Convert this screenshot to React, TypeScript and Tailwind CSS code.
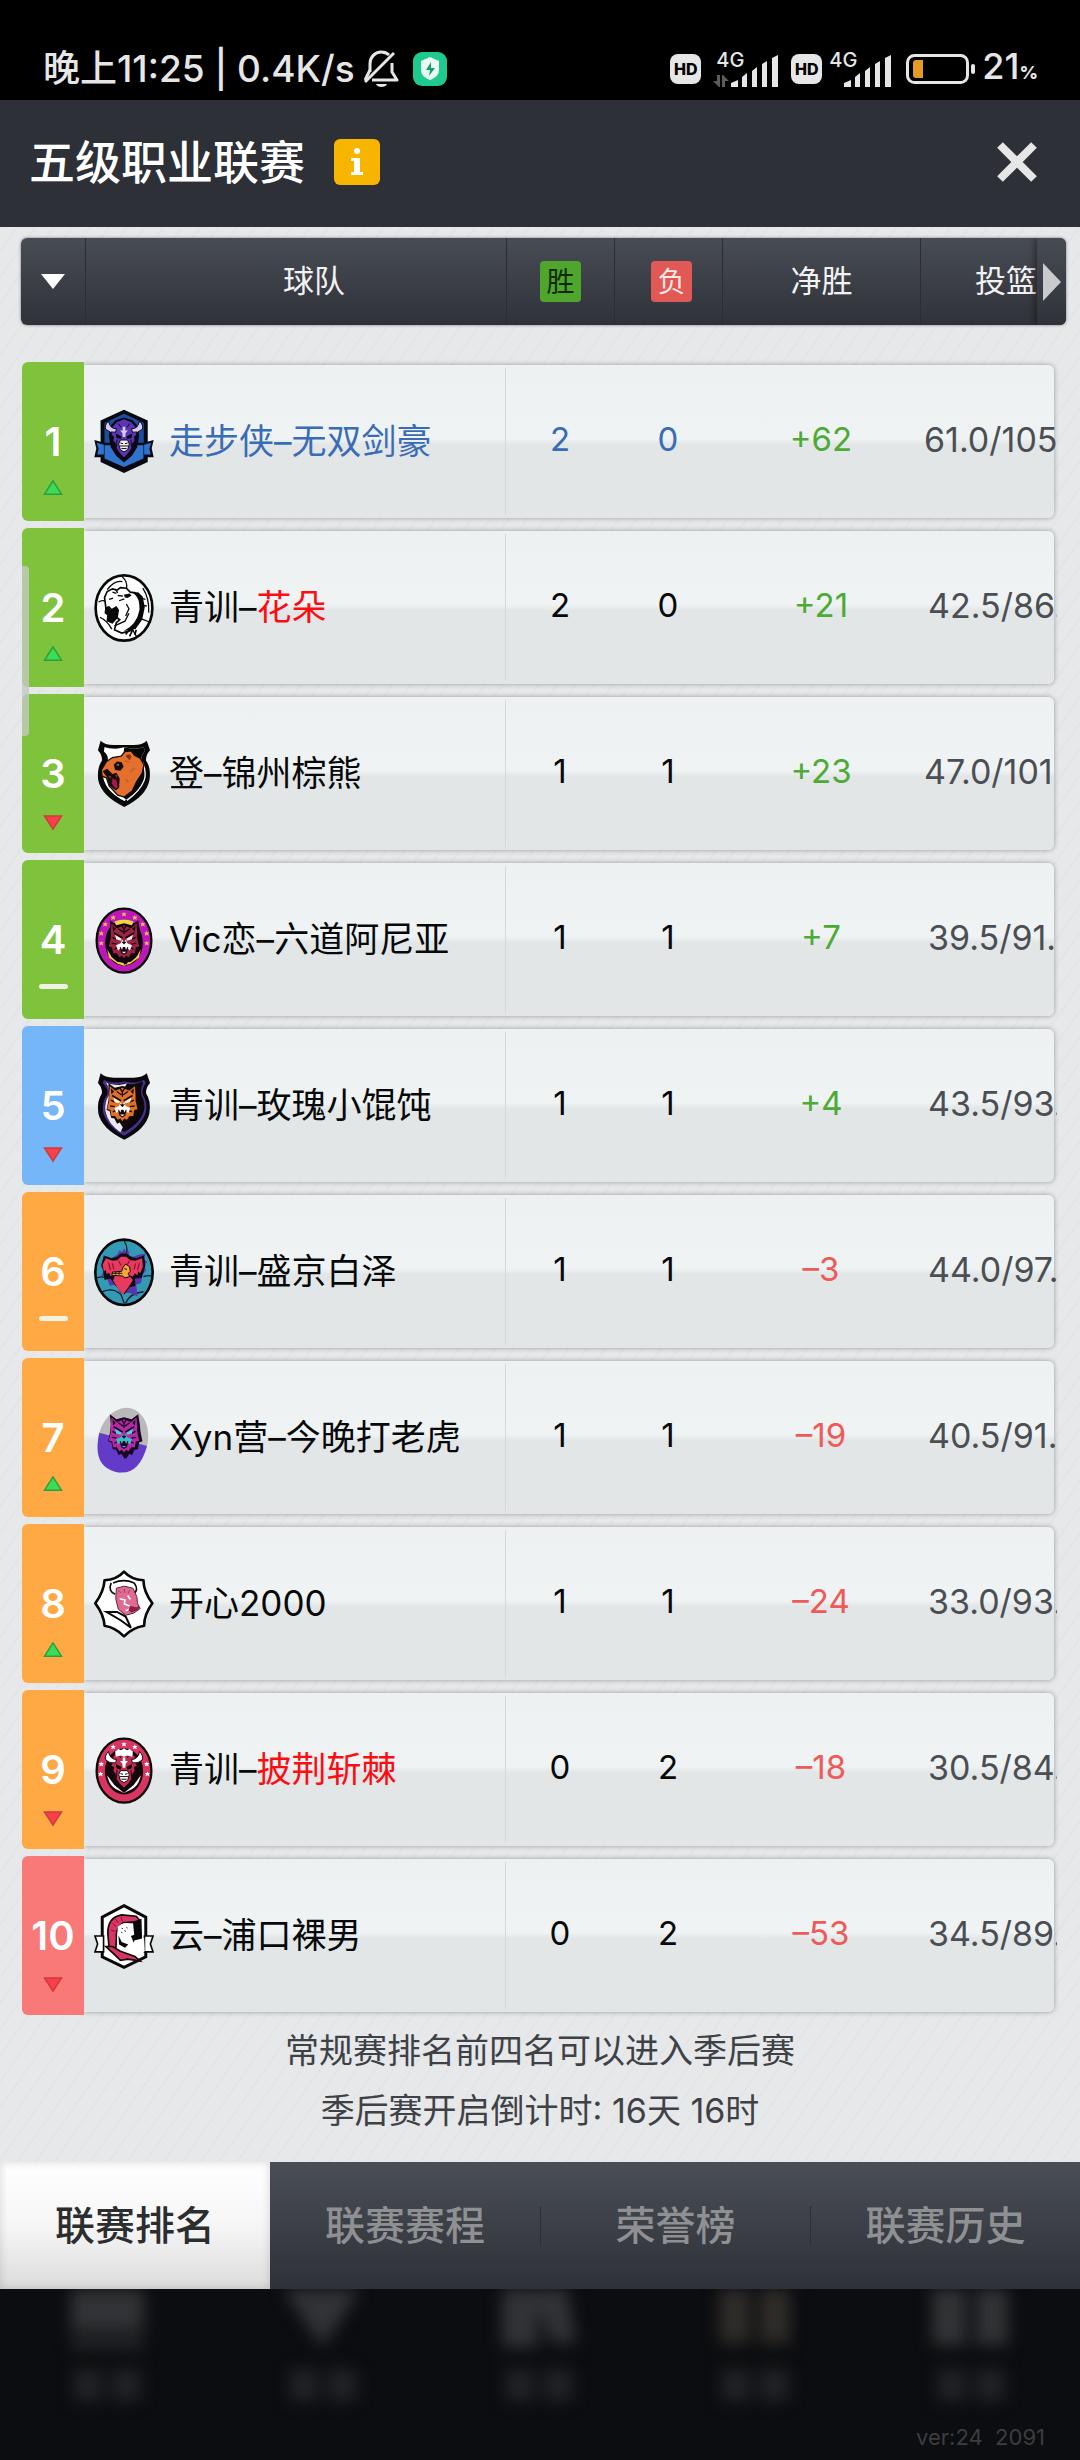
import type { ReactNode } from 'react';

type Trend = 'up' | 'down' | 'same';

interface Team {
  rank: number;
  prefix: string;
  name: string;
  nameRed?: boolean;
  own?: boolean;
  wins: number;
  losses: number;
  diff: string;
  shots: string;
  long?: boolean;
  trend: Trend;
  tone: string;
}

const GREEN = 'bg-[#7fc23b]';
const BLUE = 'bg-[#75b6f8]';
const ORANGE = 'bg-[#ffa945]';
const RED = 'bg-[#f87977]';

const teams: Team[] = [
  { rank: 1, prefix: '走步侠–', name: '无双剑豪', own: true, wins: 2, losses: 0, diff: '+62', shots: '61.0/105', long: true, trend: 'up', tone: GREEN },
  { rank: 2, prefix: '青训–', name: '花朵', nameRed: true, wins: 2, losses: 0, diff: '+21', shots: '42.5/86.', trend: 'up', tone: GREEN },
  { rank: 3, prefix: '登–', name: '锦州棕熊', wins: 1, losses: 1, diff: '+23', shots: '47.0/101', long: true, trend: 'down', tone: GREEN },
  { rank: 4, prefix: 'Vic恋–', name: '六道阿尼亚', wins: 1, losses: 1, diff: '+7', shots: '39.5/91.', trend: 'same', tone: GREEN },
  { rank: 5, prefix: '青训–', name: '玫瑰小馄饨', wins: 1, losses: 1, diff: '+4', shots: '43.5/93.', trend: 'down', tone: BLUE },
  { rank: 6, prefix: '青训–', name: '盛京白泽', wins: 1, losses: 1, diff: '–3', shots: '44.0/97.', trend: 'same', tone: ORANGE },
  { rank: 7, prefix: 'Xyn营–', name: '今晚打老虎', wins: 1, losses: 1, diff: '–19', shots: '40.5/91.', trend: 'up', tone: ORANGE },
  { rank: 8, prefix: '', name: '开心2000', wins: 1, losses: 1, diff: '–24', shots: '33.0/93.', trend: 'up', tone: ORANGE },
  { rank: 9, prefix: '青训–', name: '披荆斩棘', nameRed: true, wins: 0, losses: 2, diff: '–18', shots: '30.5/84.', trend: 'down', tone: ORANGE },
  { rank: 10, prefix: '云–', name: '浦口裸男', wins: 0, losses: 2, diff: '–53', shots: '34.5/89.', trend: 'down', tone: RED },
];

const SHIELD = 'M20 1 Q32 14 60 14 L120 14 Q148 14 160 1 L170 30 Q156 46 158 62 Q174 84 168 122 Q158 170 92 202 Q24 170 13 122 Q8 84 24 62 Q26 46 12 30 Z';

function Star({ x, y, c }: { x: number; y: number; c: string }) {
  return <path d={`M${x} ${y - 8}l2 5 6 0-4 4 2 6-6-3-6 3 2-6-4-4 6 0z`} fill={c} />;
}

function TigerHead({ fur, dark, muzzle, eye }: { fur: string; dark: string; muzzle: string; eye: string }) {
  return (
    <g>
      <path d="M48 34l20 15 23-6 23 6 20-15 5 30 2 22 6 30-10 4-4 20-10 2-8 16-8-4-10 16-2-4-2 4-10-16-8 4-8-16-10-2-4-20-10-4 6-30 2-22z" fill={dark} />
      <path d="M53 44l17 14 21-9 21 9 17-14 2 24 0 20 6 26-10 2-3 18-11 0-8 12-8-4-6 8-6-8-8 4-8-12-11 0-3-18-10-2 6-26 0-20z" fill={fur} />
      <path d="M56 50l10 10-8 8zM126 50l-10 10 8 8z" fill={dark} />
      <path d="M84 50l7 12 7-12M74 60l14 10M108 60l-14 10M91 64l0 12M56 86l12 6M126 86l-12 6M54 104l14 2M128 104l-14 2M62 122l8-4M120 122l-8-4" stroke={dark} strokeWidth="4" fill="none" />
      <path d="M64 78l20 12-3 6-14-4zM118 78l-20 12 3 6 14-4z" fill={eye} />
      <path d="M60 72l27 16M122 72l-27 16" stroke={dark} strokeWidth="5" />
      <path d="M85 92l6 10 6-10 4 12 14 6-6 16-8-8-20 0-8 8-6-16 14-6z" fill={muzzle} />
      <path d="M83 99l16 0-8 9z" fill={dark} />
      <path d="M78 115l26 0-4 18-9 6-9-6z" fill={dark} />
      <path d="M80 114l5 10 3-10zM102 114l-5 10-3-10zM84 130l14 0-7 5z" fill={muzzle} />
    </g>
  );
}

function BisonHead({ fur, dark, horn, muzzle }: { fur: string; dark: string; horn: string; muzzle: string }) {
  return (
    <g>
      <path d="M91 32l26 8 16 18 4 30-6 34-16 26-24 20-24-20-16-26-6-34 4-30 16-18z" fill={dark} />
      <path d="M91 37l22 9 14 16-2 12 4 10-8 6 2 12-6 6-4 18-10 14-12 12-12-12-10-14-4-18-6-6 2-12-8-6 4-10-2-12 14-16z" fill={fur} />
      <path d="M44 42q-14 14-8 26 12 12 30 8l2-10q-20 0-24-24zM138 42q14 14 8 26-12 12-30 8l-2-10q20 0 24-24z" fill={horn} stroke={dark} strokeWidth="3" />
      <path d="M87 60l8 0 0 11 8 0-7 8-1 12-8 0-1-12-7-8 8 0z" fill={horn} />
      <path d="M66 80l18 9-4 8-12-4zM116 80l-18 9 4 8 12-4z" fill={dark} />
      <path d="M80 100l22 0 5 12-5 18-11 6-11-6-5-18z" fill={muzzle} stroke={dark} strokeWidth="3" />
      <path d="M80 109l8 2M102 109l-8 2M79 118l24 0M83 126l16 0M70 98l-2 24M112 98l2 24M74 50l8 12M108 50l-8 12" stroke={dark} strokeWidth="3" fill="none" />
    </g>
  );
}

function PhoenixBall() {
  return (
    <>
      <ellipse cx="91" cy="107" rx="87" ry="99" fill="#3499b4" stroke="#080808" strokeWidth="8" />
      <path d="M92 12q14 24 4 44M4 126q14-8 30-4M178 120q-12-6-28 0M22 168q32-18 60 6l10 28M96 200q14-30 54-34" stroke="#0c1c24" strokeWidth="4" fill="none" />
      <path d="M70 54l8-14 6 6 8-12 6 14 10-6-4 14 16 4 14-6 24-4-8 16 12 10-12 10 8 14-10 14-6 26-14 4 4 36-22-10-30 0-14-26-18 4-8-22-18-10 10-16-12-12 14-12-2-16 20 4z" fill="#5a35ae" />
      <path d="M30 56l24 8 16-4 12-10 18 0 12 10 16 4 24-8 4 30-6 20-6 18-20 2 2 22-18 4-16 22-14-14-14-14-14-20-18 4-4-26-6-20z" fill="#120c14" />
      <path d="M36 64l20 8 14-2 12-10 16 0 12 10 16 2 20-8 2 26-8 20-6-6-2 12-8-6-6 10-12-4 12 14-12 20-18 24-18-22-12-20 6-16-14 2-4-10-8 4-2-12-6 4-4-20z" fill="#e83a5e" />
      <path d="M88 92l8-10 12 8 2 14-6 6 4 10-14 4-8-6-32-2 2-10 28-2z" fill="#f6a63a" stroke="#120b10" strokeWidth="3" />
      <path d="M56 110l30 0M66 106l0 8M76 106l0 8M92 96l8 2" stroke="#180f10" strokeWidth="3" />
      <path d="M44 78l6 22M56 80l4 18M138 78l-6 22M126 80l-4 18M74 72l8 14M108 72l-8 12" stroke="#8f1738" strokeWidth="4" />
    </>
  );
}

const crests: Record<number, ReactNode> = {
  1: (
    <>
      <path d="M91 8l72 33 0 126-72 33-71-33 0-126z" fill="#070a10" />
      <path d="M91 20l60 28 0 112-60 28-59-28 0-112z" fill="#1d4fa0" />
      <path d="M1 100l30 8 120 0 30-8-6 25 6 27-24 0-4 14-26 6-36 20-36-20-26-6-4-14-24 0 6-26z" fill="#070a10" />
      <path d="M8 108l22 6 0 30-20 0 4-18zM174 108l-22 6 0 30 20 0-4-18zM32 116l118 0 0 40-59 26-59-26z" fill="#2f73cf" />
      <BisonHead fur="#5a35b4" dark="#0b0713" horn="#d6caf0" muzzle="#f3eff8" />
    </>
  ),
  2: (
    <>
      <ellipse cx="91" cy="106" rx="86" ry="99" fill="#fff" stroke="#080808" strokeWidth="8" />
      <path d="M86 12q18 14 12 40M14 88q10-8 22-2M148 46q20 30 18 74M18 134q22 10 36 36M110 160l20 34M146 140l26 10M40 50q24-30 46-24" stroke="#080808" strokeWidth="4" fill="none" />
      <path d="M32 74l8-18 16-8 14 4 10-8 18 2 12 12 16 2 12 18 4 32-8 38-22 26-28 8-22-10 6-22 10-8-8-6-22-4-12-26z" fill="#fff" stroke="#080808" strokeWidth="5" />
      <path d="M34 104l12-4 8 8 14-8 8 12-4 24-16 18-18-8 2-18-8-6z" fill="#080808" />
      <path d="M90 66l18-4 6 6-12 8-8-2zM118 60q24 18 20 52-8 44-48 64l36-6 20-28 8-38-6-32-14-14z" fill="#080808" />
      <path d="M56 58l12 4M72 68l16 2M76 84l16-6M98 94l8 14-10 22M62 160l32-14 12-24M46 80l12-4M64 48l8 12M142 76l14 4M148 98l12 2" stroke="#080808" strokeWidth="4" fill="none" />
      <path d="M96 186l18-22M108 192l10-22M124 188l4-16" stroke="#080808" strokeWidth="5" />
    </>
  ),
  3: (
    <>
      <path d={SHIELD} transform="translate(0 4)" fill="#080808" />
      <path d="M32 24q14 6 40 5l20-4 20 4q24 2 38-5l5 12q-16 18-10 34 14 20 10 50-12 40-63 68-54-28-64-70-2-32 13-50 5-16-11-30z" fill="#fff" />
      <path d="M92 25l20 4q24 2 38-5l5 12q-16 18-10 34 14 20 10 50-12 36-58 64l-24-24z" fill="#080808" />
      <path d="M148 70q12 32 4 56-14 34-52 60" stroke="#f5f5f5" strokeWidth="4" fill="none" />
      <path d="M38 68l18-12 26-4 12-14 18-2 12 14 16 8 12 20-6 26-16 24-14 30-24 18-20-6-26-28-8-24-14-6-2-18z" fill="#e3702d" stroke="#100a08" strokeWidth="4" />
      <path d="M60 78l10-10 14 2 6 14-10 12-16-2z" fill="#180a0a" />
      <path d="M68 78l8-2-2 6z" fill="#e6a080" />
      <path d="M26 98l14-8 16 16 12-4 10 18-2 28-10 8-20-16-6-24z" fill="#170b10" />
      <path d="M56 120l12 4 4 24-8 2-10-16z" fill="#a51a48" />
      <path d="M44 112l6 10 2-10zM64 108l4 10 4-10zM96 52q8-12 18 0l-6 12z" fill="#8b3217" />
      <path d="M94 66l14 4M110 100l14-12M96 122l8 8" stroke="#c55a22" strokeWidth="4" />
    </>
  ),
  4: (
    <>
      <ellipse cx="91" cy="108" rx="83" ry="97" fill="#bb18b5" stroke="#090609" strokeWidth="7" />
      <ellipse cx="91" cy="114" rx="57" ry="70" fill="#0d080b" />
      <path d="M62 50q30-12 58 0l-6 14-46 0z" fill="#f3d34c" />
      <path d="M40 134l6 26 26 18 19 6 19-6 26-18 6-26-14 24-16 14-21 4-21-4-16-14z" fill="#f0d43a" />
      <g transform="translate(0 12)">
        <TigerHead fur="#9b2345" dark="#13070c" muzzle="#fff" eye="#f7e8e8" />
      </g>
      <Star x={91} y={28} c="#f7b765" /><Star x={58} y={38} c="#f7b765" /><Star x={124} y={38} c="#f7b765" />
      <Star x={34} y={58} c="#f7b765" /><Star x={148} y={58} c="#f7b765" />
      <Star x={22} y={86} c="#f7b765" /><Star x={160} y={86} c="#f7b765" />
      <Star x={22} y={116} c="#f7b765" /><Star x={160} y={116} c="#f7b765" />
    </>
  ),
  5: (
    <>
      <path d={SHIELD} transform="translate(0 6)" fill="#0a080e" />
      <path d="M30 26q18 10 44 9l18-3 18 3q26 1 42-9l5 10q-14 20-9 36 14 20 10 50-12 44-67 74-54-30-64-74-2-32 13-50 5-18-13-36z" fill="#4a2f8c" />
      <path d="M36 32q16 9 38 8l18-3 18 3q20 1 36-8l3 6q-10 18-5 36 12 20 8 46-10 38-60 66-50-28-59-66-2-28 11-46 5-18-8-42z" fill="#0a080e" />
      <path d="M36 34q16 8 40 8l24-4-12 20-4 60 14 32-18 36q-38-26-46-66-2-28 11-46 5-18-9-40z" fill="#ece8f4" />
      <g transform="translate(-5 2)">
        <TigerHead fur="#e0702a" dark="#150b08" muzzle="#fff" eye="#fff4e0" />
      </g>
    </>
  ),
  6: <PhoenixBall />,
  7: (
    <>
      <g transform="rotate(14 88 112)">
        <ellipse cx="88" cy="112" rx="75" ry="99" fill="#b9b8ba" />
        <path d="M13 108 Q15 211 88 211 Q161 211 163 112 Z" fill="#643bc9" />
      </g>
      <TigerHead fur="#b42aa6" dark="#170a20" muzzle="#38c0ca" eye="#48d4dc" />
    </>
  ),
  8: (
    <>
      <path d="M91 8Q112 32 150 34Q150 68 177 104Q152 138 152 172Q116 178 91 204Q66 178 32 172Q30 138 4 104Q30 68 32 34Q70 32 91 8Z" fill="#fff" stroke="#080808" strokeWidth="8" strokeLinejoin="round" />
      <path d="M52 42q-10 26 12 34M122 42q16 22-4 34M58 42q32-14 64 0" stroke="#080808" strokeWidth="5" fill="none" />
      <path d="M68 58l24-6 26 6 12 26 2 20 8 16-20 14-24 6-22-18-8-32z" fill="#e06b92" stroke="#5c2234" strokeWidth="3" />
      <path d="M38 130l32 0 26 14 16 34-30-22z" fill="#fff" stroke="#080808" strokeWidth="6" />
      <path d="M78 90l16 4-2 12 16 6M102 80l8 12M96 126l18-6" stroke="#fff" strokeWidth="5" fill="none" />
      <path d="M110 112l18 4 10-4-4 12-20 8-10-6z" fill="#8c1f43" />
      <path d="M74 66l8 6M92 60l0 12M108 64l-4 10" stroke="#a23f63" strokeWidth="3" />
    </>
  ),
  9: (
    <>
      <ellipse cx="91" cy="108" rx="83" ry="97" fill="#d93563" stroke="#10070a" strokeWidth="7" />
      <ellipse cx="91" cy="110" rx="58" ry="70" fill="#14080c" />
      <path d="M40 122q6 30 26 42l25 12 25-12q20-12 26-42l-22 30-29 14-29-14z" fill="#fff" />
      <g transform="translate(0 8)">
        <BisonHead fur="#c02c52" dark="#16070c" horn="#fff" muzzle="#fff" />
      </g>
      <path d="M64 50l10-8 8 4 9-6 9 6 8-4 10 8-2 16-16-4-9 4-9-4-16 4z" fill="#fff" />
      <Star x={91} y={28} c="#fff" /><Star x={58} y={36} c="#fff" /><Star x={124} y={36} c="#fff" />
      <Star x={22} y={88} c="#fff" /><Star x={160} y={88} c="#fff" />
      <Star x={20} y={118} c="#fff" /><Star x={162} y={118} c="#fff" />
    </>
  ),
  10: (
    <>
      <path d="M91 14l66 35 0 120-66 32-66-32 0-120z" fill="#fff" stroke="#080808" strokeWidth="9" />
      <path d="M3 106l26 0 0 48-26 0 8-24zM179 106l-26 0 0 48 26 0-8-24z" fill="#fff" stroke="#080808" strokeWidth="5" />
      <path d="M42 100q-2-50 42-58l44 4 12 14-6 16-16-12-30 2q-24 18-20 50l-2 34-20-6z" fill="#d93563" stroke="#10070a" strokeWidth="5" />
      <path d="M72 78q18-18 40-8l4 46-12 12 4 24-24-6-14-22z" fill="#fff" />
      <path d="M118 62l26-8 2 64-26 8-8-20 10-4zM74 104l10 20 20 8-10 10-18-10z" fill="#080808" />
      <path d="M122 120l30-8 2 40-18 8-20-16z" fill="#fff" />
      <path d="M36 138l20 0 24 14 44 16 16 14-38-6-22 4-12-12z" fill="#d93563" stroke="#10070a" strokeWidth="5" />
      <path d="M56 68l12 10M64 54l10 12M82 48l4 14M52 88l12 4M84 82l4 2M98 80l4 2M82 94l4 2M92 90l5 2" stroke="#7d1533" strokeWidth="3" />
    </>
  ),
};

function Crest({ rank }: { rank: number }) {
  return (
    <svg viewBox="0 0 182 212" className="h-[70px] w-[60px] shrink-0" aria-hidden="true">
      {crests[rank]}
    </svg>
  );
}

function TrendMark({ trend }: { trend: Trend }) {
  if (trend === 'same') return <span className="mt-1.5 h-[5px] w-[29px] rounded-sm bg-[#eef3e4]" />;
  return (
    <svg viewBox="0 0 20 20" className="h-5 w-5" aria-hidden="true">
      {trend === 'up' ? (
        <path d="M10 0.8L18.5 14.2H1.5Z" fill="#3bdc56" stroke="#2c9f3c" strokeWidth="1.5" />
      ) : (
        <path d="M10 17.2L18.5 4H1.5Z" fill="#f9404a" stroke="#cf3a3c" strokeWidth="1.5" />
      )}
    </svg>
  );
}

function HdBadge() {
  return (
    <span className="flex h-[30px] w-[31px] items-center justify-center rounded-lg bg-[#e6e6e6] text-[16px] leading-none font-extrabold text-black">
      HD
    </span>
  );
}

function Signal({ arrows }: { arrows?: boolean }) {
  return (
    <span className="relative flex h-[36px] w-[66px] items-end justify-end">
      <span className="absolute top-0 left-[3px] text-[20px] leading-[18px] font-medium">4G</span>
      <svg viewBox="0 0 66 36" className="h-full w-full" aria-hidden="true">
        {arrows && (
          <g fill="#5c5c5c">
            <path d="M4 24h3v12h-1l-6-6h4zM9 36h3v-6h4l-6-6h-1z" />
          </g>
        )}
        <g fill="#e6e6e6">
          <path d="M18 32l7-3v7h-7zM29 26l5-4v14h-5zM39 20l5-4v20h-5zM49 13l5-3v26h-5zM59 7l6-3v32h-6z" />
        </g>
      </svg>
    </span>
  );
}

function StatusBar() {
  return (
    <div className="flex h-[100px] items-end bg-black pr-[42px] pb-[13px] pl-[43px] text-[#e6e6e6]">
      <div className="flex h-[36px] items-center">
        <span className="text-[37px] leading-[36px] font-medium whitespace-pre">晚上11:25 | 0.4K/s</span>
        <svg viewBox="0 0 36 38" className="ml-2 h-[38px] w-9" fill="none" stroke="#e6e6e6" strokeWidth="3" aria-hidden="true">
          <path d="M7 22V14C7 7 12 2 18 2c4 0 6 1 8 3M29 13v9l5 8H9M2 32L31 3" strokeLinejoin="round" />
          <path d="M13 34h11c-1 4-10 4-11 0z" fill="#e6e6e6" stroke="none" />
          <path d="M7 20L2 30" />
        </svg>
        <svg viewBox="0 0 34 34" className="ml-3.5 h-[34px] w-[34px]" aria-hidden="true">
          <rect width="34" height="34" rx="9" fill="#1fca8e" />
          <path d="M17 5l9 4v9c0 5-4 8-9 10-5-2-9-5-9-10V9z" fill="#e9fbf3" />
          <path d="M18 10l-5 8h4l-1 6 6-8h-4z" fill="#1a9c70" />
        </svg>
      </div>
      <div className="ml-auto flex h-[36px] items-center">
        <HdBadge />
        <span className="mr-3 ml-3 flex"><Signal arrows /></span>
        <HdBadge />
        <span className="mr-3.5 ml-1 flex"><Signal /></span>
        <svg viewBox="0 0 70 30" className="h-[30px] w-[70px]" aria-hidden="true">
          <rect x="1.5" y="1.5" width="60" height="27" rx="7" fill="none" stroke="#e6e6e6" strokeWidth="3" />
          <path d="M10 6h7v18h-7q-3 0-3-3V9q0-3 3-3z" fill="#e39b21" />
          <rect x="65" y="10" width="4" height="10" rx="2" fill="#e6e6e6" />
        </svg>
        <span className="ml-1.5 flex items-baseline text-[36px] leading-[36px] font-medium">
          21<span className="text-[18px] font-extrabold">%</span>
        </span>
      </div>
    </div>
  );
}

function TitleBar() {
  return (
    <header className="flex h-[127px] items-center bg-[#2d3037] px-[29px] pb-1">
      <h1 className="text-[46px] leading-[56px] font-medium text-white">五级职业联赛</h1>
      <button
        type="button"
        aria-label="联赛说明"
        className="ml-[29px] flex h-[46px] w-[46px] items-center justify-center rounded-md bg-[#f8b500]"
      >
        <svg viewBox="0 0 14 28" className="h-7 w-3.5" fill="#fff" aria-hidden="true">
          <circle cx="7" cy="3" r="3" />
          <path d="M1 10h9v14h3v3H1v-3h3V13H1z" />
        </svg>
      </button>
      <button type="button" aria-label="关闭" className="mr-3.5 ml-auto flex h-10 w-10 items-center justify-center">
        <svg viewBox="0 0 40 40" className="h-10 w-10" stroke="#e6e6e6" strokeWidth="8" aria-hidden="true">
          <path d="M3 3L37 37M37 3L3 37" />
        </svg>
      </button>
    </header>
  );
}

const COLS_HEAD = 'grid grid-cols-[64px_1fr_108px_108px_198px_146px]';
const COLS_ROW = 'grid grid-cols-[62px_1fr_108px_108px_198px_134px]';
const HEAD_CELL = 'flex items-center justify-center border-l border-[#2a2d33] font-normal';

function TableHead() {
  return (
    <thead className="block">
      <tr className={`${COLS_HEAD} ml-[21px] mr-3.5 h-[87px] overflow-hidden rounded-md bg-linear-to-b from-[#484c54] to-[#2f3239] text-[31px] text-[#f2f2f2] shadow-[0_0_3px_rgba(0,0,0,0.5)]`}>
        <th className="flex items-center justify-center">
          <button type="button" aria-label="筛选" className="flex h-full w-full items-center justify-center">
            <svg viewBox="0 0 24 15" className="h-[15px] w-6" fill="#fff" aria-hidden="true">
              <path d="M0 0h24L12 15z" />
            </svg>
          </button>
        </th>
        <th scope="col" className={`${HEAD_CELL} pl-9`}>球队</th>
        <th scope="col" className={HEAD_CELL}>
          <span className="flex h-[41px] w-[41px] items-center justify-center rounded-sm bg-[#50a52d] text-[28px] text-[#102b08]">胜</span>
        </th>
        <th scope="col" className={`${HEAD_CELL} pl-1.5`}>
          <span className="flex h-[41px] w-[41px] items-center justify-center rounded-sm bg-[#e05955] text-[28px] text-[#fde8e6]">负</span>
        </th>
        <th scope="col" className={HEAD_CELL}>净胜</th>
        <th scope="col" className="flex items-stretch justify-end border-l border-[#2a2d33] font-normal">
          <span className="flex items-center">投篮</span>
          <button
            type="button"
            aria-label="更多数据"
            className="flex w-[29px] items-center justify-center bg-linear-to-b from-[#474b53] to-[#2f3239] shadow-[-3px_0_6px_rgba(0,0,0,0.35)]"
          >
            <svg viewBox="0 0 18 38" className="h-[38px] w-[18px]" fill="#c9cacc" aria-hidden="true">
              <path d="M0 0L18 19L0 38z" />
            </svg>
          </button>
        </th>
      </tr>
    </thead>
  );
}

function TeamRow({ team }: { team: Team }) {
  const stat = team.own ? 'text-[#3a6cb6]' : 'text-[#08090a]';
  const diff = team.diff.startsWith('+') ? 'text-[#4dab35]' : 'text-[#ee5a58]';
  return (
    <tr className={`${COLS_ROW} relative h-[159px] text-[33px]`}>
      <td className={`flex flex-col items-center rounded-l-md ${team.tone}`}>
        <span className="mt-[56px] mb-3.5 text-[40px] leading-[48px] font-semibold text-white">{team.rank}</span>
        <TrendMark trend={team.trend} />
      </td>
      <td
        className="col-span-5 my-[3px] grid grid-cols-[1fr_548px] rounded-r-md bg-linear-to-b from-[#edf1f2] from-0% via-[#eff3f3] via-48% to-[#e2e6e7] to-52% shadow-[0_0_5px_rgba(0,0,0,0.35)] [clip-path:inset(-6px_-6px_-6px_0)]"
      >
        <span className={`my-[3px] flex items-center gap-[15px] border-r border-[#d5d9da] pl-2.5 text-[35px] whitespace-nowrap ${stat}`}>
          <Crest rank={team.rank} />
          <span>
            {team.prefix}
            <span className={team.nameRed ? 'text-[#fb0d12]' : undefined}>{team.name}</span>
          </span>
        </span>
        <span className="grid grid-cols-[108px_108px_198px_137px] items-center overflow-hidden pb-1 text-center -mr-[3px]">
          <span className={stat}>{team.wins}</span>
          <span className={stat}>{team.losses}</span>
          <span className={diff}>{team.diff}</span>
          <span className={`overflow-hidden text-left text-[34px] whitespace-nowrap text-[#4b4f53] ${team.long ? 'pl-1' : 'pl-2'}`}>{team.shots}</span>
        </span>
      </td>
    </tr>
  );
}

const tabs = ['联赛排名', '联赛赛程', '荣誉榜', '联赛历史'];

function Tabs() {
  return (
    <div role="tablist" className="grid h-[127px] grid-cols-4 bg-linear-to-b from-[#4a4e56] to-[#2e3138] text-[40px] font-medium">
      {tabs.map((tab, i) => (
        <button
          key={tab}
          type="button"
          role="tab"
          aria-selected={i === 0}
          className={
            i === 0
              ? 'bg-linear-to-b from-white via-[#f6f6f6] to-[#dcdcdc] text-[#2c2d2f] shadow-[inset_0_0_10px_rgba(0,0,0,0.15)]'
              : 'flex items-center text-[#8f9091]'
          }
        >
          {i > 1 && <span className="h-10 w-px bg-[#2c2f36]" />}
          <span className="flex-1">{tab}</span>
        </button>
      ))}
    </div>
  );
}

const dimIcons = [
  'M35 0H108V50H35ZM35 58H108V66H35Z',
  'M26 0H112L92 34L70 66L48 34Z',
  'M34 0H98L108 62H84L70 26V66H34Z',
  'M36 0H66V62H36ZM76 0H106V62H76Z',
  'M32 0H66V64H32ZM76 0H108V64H76Z',
];

function DimNav() {
  return (
    <footer className="flex flex-1 flex-col justify-between overflow-hidden bg-[#0c0d10] pb-2">
      <div className="grid grid-cols-5" aria-hidden="true">
        {dimIcons.map((d, i) => (
          <span key={d} className="flex flex-col items-center">
            <svg viewBox="0 0 144 130" className="h-[130px] w-36 blur-[8px]">
              <path d={d} transform="translate(0 -8)" fill={i === 3 ? '#302d2a' : '#323336'} />
              <path d="M38 80H66V112H38ZM76 80H104V112H76Z" fill="#222326" />
            </svg>
          </span>
        ))}
      </div>
      <p className="pr-[35px] text-right text-[22px] leading-[30px] whitespace-pre text-[#3c3d3f]">ver:24  2091</p>
    </footer>
  );
}

export default function App() {
  return (
    <div className="flex min-h-screen flex-col bg-black font-[Inter,'Noto_Sans_CJK_SC',sans-serif]">
      <StatusBar />
      <TitleBar />
      <main className="bg-[#e6e8ea] bg-[repeating-linear-gradient(125deg,transparent_0px,transparent_13px,rgba(0,0,0,0.015)_13px,rgba(0,0,0,0.015)_15px)] pt-[11px] pb-[21px]">
        <table className="block w-full">
          <TableHead />
          <tbody className="relative mt-[37px] mr-[26px] ml-[22px] flex flex-col gap-[7px]">
            {teams.map((team) => (
              <TeamRow key={team.rank} team={team} />
            ))}
            <tr className="absolute top-[204px] left-0 block h-[170px] w-[7px] rounded-r-sm bg-[#c6c9c6]/80" aria-hidden="true" />
          </tbody>
        </table>
        <div className="mt-1.5 text-center text-[34px] leading-[60px] text-[#3e4246]">
          <p>常规赛排名前四名可以进入季后赛</p>
          <p>季后赛开启倒计时: 16天 16时</p>
        </div>
      </main>
      <Tabs />
      <DimNav />
    </div>
  );
}
